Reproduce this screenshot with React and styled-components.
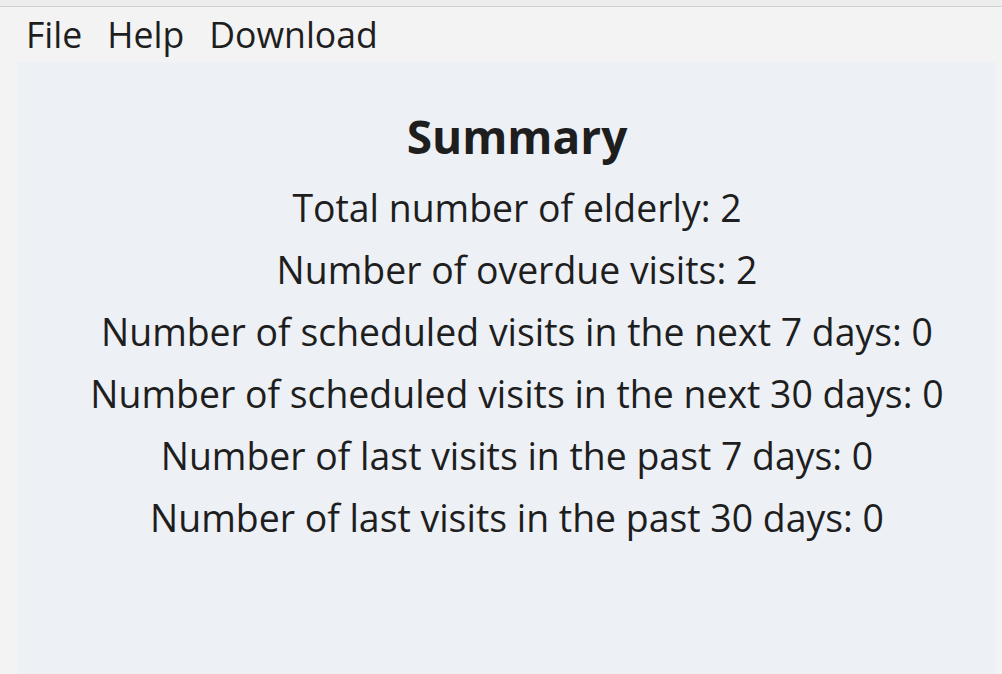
import { createGlobalStyle, styled } from "styled-components";

const GlobalStyle = createGlobalStyle`
  html, body {
    margin: 0;
    padding: 0;
    background: #f3f3f3;
    font-family: "Open Sans", "Noto Sans", sans-serif;
    color: #1e1e1e;
    overflow: hidden;
  }
`;

const Root = styled.div`
  display: flex;
  flex-direction: column;
  height: 100vh;
`;

const TopStrip = styled.div`
  height: 6px;
  background: #ededed;
  border-bottom: 1px solid #d2d2d2;
`;

const MenuBar = styled.div`
  display: flex;
  gap: 25px;
  padding: 10px 0 0 26px;
  height: 45px;
  box-sizing: border-box;
  align-items: center;
`;

const MenuItem = styled.span`
  font-size: 35.6px;
  line-height: 1;
  cursor: pointer;
`;

const Panel = styled.div`
  flex: 1;
  margin: 10px 6px 0 18px;
  background: #edf0f5;
  display: flex;
  flex-direction: column;
  align-items: center;
  padding: 46px 0 0 20px;
`;

const Title = styled.h1`
  margin: 0 0 13px;
  font-size: 46px;
  font-weight: 700;
  line-height: 56px;
`;

const Stat = styled.div`
  font-size: 37.4px;
  line-height: 62px;
  white-space: nowrap;
`;

const stats = [
  ["Total number of elderly", 2],
  ["Number of overdue visits", 2],
  ["Number of scheduled visits in the next 7 days", 0],
  ["Number of scheduled visits in the next 30 days", 0],
  ["Number of last visits in the past 7 days", 0],
  ["Number of last visits in the past 30 days", 0],
];

const App = () => {
  return (
    <>
      <GlobalStyle />
      <Root>
        <TopStrip />
        <MenuBar>
          <MenuItem>File</MenuItem>
          <MenuItem>Help</MenuItem>
          <MenuItem>Download</MenuItem>
        </MenuBar>
        <Panel>
          <Title>Summary</Title>
          {stats.map(([label, value]) => (
            <Stat key={label}>
              {label}: {value}
            </Stat>
          ))}
        </Panel>
      </Root>
    </>
  );
};

export default App;
